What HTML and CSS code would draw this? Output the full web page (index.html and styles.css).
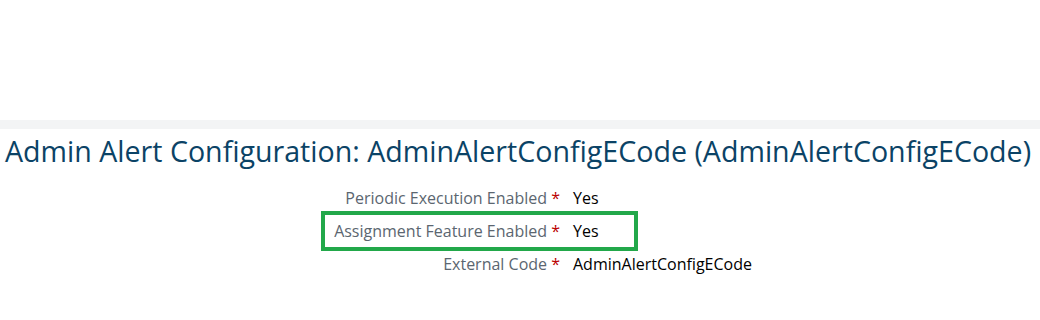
FILE: index.html
```html
<!doctype html>
<html>

	<head>
		<meta name="viewport" content="width=device-width, initial-scale=1.0">
		<title>Admin Alert Configuration</title>
		<link rel="stylesheet" href="styles.css">
	</head>

	<body>

		<div class="topSpace"></div>
		<div class="shellBar"></div>

		<main>

			<h1 class="pageTitle">Admin Alert Configuration: AdminAlertConfigECode (AdminAlertConfigECode)</h1>

			<div class="form">

				<div class="formRow">
					<span class="formLabel">Periodic Execution Enabled <span class="req">*</span></span>
					<span class="formValue">Yes</span>
				</div>

				<div class="formRow marked">
					<span class="formLabel">Assignment Feature Enabled <span class="req">*</span></span>
					<span class="formValue">Yes</span>
				</div>

				<div class="formRow">
					<span class="formLabel">External Code <span class="req">*</span></span>
					<span class="formValue">AdminAlertConfigECode</span>
				</div>

			</div>

		</main>

	</body>

</html>
```

FILE: styles.css
```css
html, body {
	margin: 0; padding: 0;
	font-family: "Open Sans", sans-serif;
	background-color: #ffffff;
}

.topSpace {
	height: 120px;
}

.shellBar {
	height: 9px;
	background-color: #f3f4f5;
}

.pageTitle {
	margin: 0;
	padding: 4px 0 0 5px;
	font-size: 28.6px;
	font-weight: normal;
	line-height: 36px;
	color: #0b4366;
	white-space: nowrap;
}

.form {
	padding-top: 13px;
}

.formRow {
	position: relative;
	display: flex;
	height: 33px;
	line-height: 33px;
	font-size: 16px;
}

.formLabel {
	width: 560px;
	text-align: right;
	color: #5b6670;
}

.req {
	color: #bb0000;
}

.formValue {
	margin-left: 13px;
	color: #000000;
}

.marked::after {
	content: "";
	position: absolute;
	left: 321px;
	top: -4px;
	width: 317px;
	height: 40px;
	box-sizing: border-box;
	border: 4px solid #22a84a;
}
```
